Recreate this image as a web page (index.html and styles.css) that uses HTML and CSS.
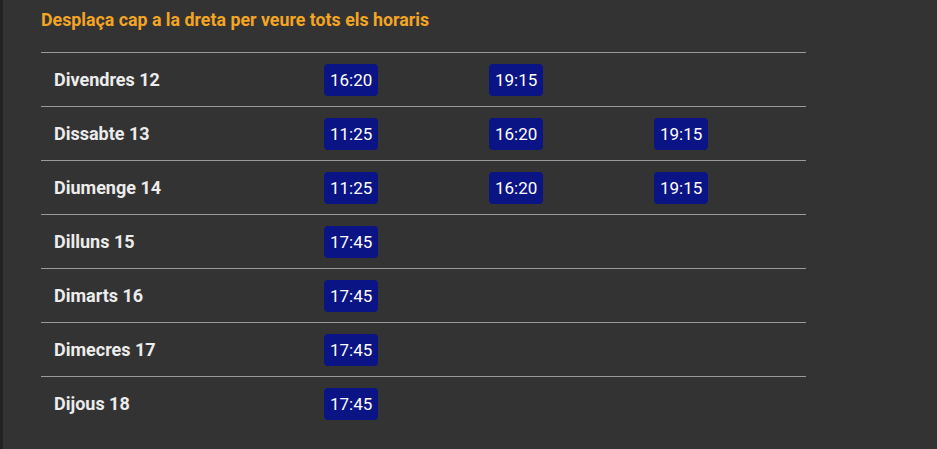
FILE: index.html
```html
<!DOCTYPE html>
<html lang="ca">
<head>
<meta charset="utf-8">
<link rel="stylesheet" href="styles.css">
</head>
<body>
<div class="page">
  <h2 class="hint">Desplaça cap a la dreta per veure tots els horaris</h2>
  <table class="schedule">
    <colgroup><col class="c-day"><col class="c-time"><col class="c-time"><col class="c-time"></colgroup>
    <tr><td class="day">Divendres 12</td><td><span class="time">16:20</span></td><td><span class="time">19:15</span></td><td></td></tr>
    <tr><td class="day">Dissabte 13</td><td><span class="time">11:25</span></td><td><span class="time">16:20</span></td><td><span class="time">19:15</span></td></tr>
    <tr><td class="day">Diumenge 14</td><td><span class="time">11:25</span></td><td><span class="time">16:20</span></td><td><span class="time">19:15</span></td></tr>
    <tr><td class="day">Dilluns 15</td><td><span class="time">17:45</span></td><td></td><td></td></tr>
    <tr><td class="day">Dimarts 16</td><td><span class="time">17:45</span></td><td></td><td></td></tr>
    <tr><td class="day">Dimecres 17</td><td><span class="time">17:45</span></td><td></td><td></td></tr>
    <tr><td class="day">Dijous 18</td><td><span class="time">17:45</span></td><td></td><td></td></tr>
  </table>
</div>
</body>
</html>
```
FILE: styles.css
```css
html, body {
  margin: 0;
  padding: 0;
  background: #333333;
  height: 100%;
}
body {
  font-family: Roboto, "Liberation Sans", sans-serif;
  border-left: 3px solid #222222;
  box-sizing: border-box;
}
.page {
  padding: 10px 38px 0;
}
.hint {
  margin: 0 0 22px;
  font-size: 17.8px;
  line-height: 20px;
  font-weight: 700;
  color: #f4a524;
}
.schedule {
  width: 765px;
  border-collapse: collapse;
  table-layout: fixed;
}
.c-day { width: 270px; }
.c-time { width: 165px; }
.schedule td {
  border-top: 1px solid #9a9a9a;
  height: 54px;
  padding: 0 13px;
  vertical-align: middle;
  box-sizing: border-box;
}
.day {
  font-size: 18px;
  font-weight: 700;
  color: #ececec;
}
.time {
  display: inline-block;
  background: #0b1484;
  color: #ffffff;
  font-size: 17px;
  line-height: 24px;
  padding: 4px 6px;
  border-radius: 4px;
}
```
